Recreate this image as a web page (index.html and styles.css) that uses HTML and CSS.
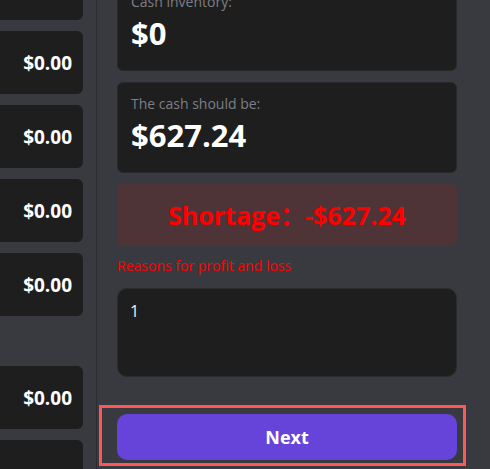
FILE: index.html
```html
<!DOCTYPE html>
<html lang="en">
<head>
<meta charset="utf-8">
<title>Cash count</title>
<link rel="stylesheet" href="styles.css">
</head>
<body>
<div class="app">
  <aside class="side">
    <div class="side-list">
      <div class="amount-card">$0.00</div>
      <div class="amount-card">$0.00</div>
      <div class="amount-card">$0.00</div>
      <div class="amount-card">$0.00</div>
      <div class="amount-card">$0.00</div>
      <div class="group-gap"></div>
      <div class="amount-card">$0.00</div>
      <div class="amount-card tall">$0.00</div>
    </div>
  </aside>
  <main class="main">
    <div class="content">
      <div class="stat-card first">
        <div class="stat-label">Cash inventory:</div>
        <div class="stat-value">$0</div>
      </div>
      <div class="stat-card">
        <div class="stat-label">The cash should be:</div>
        <div class="stat-value">$627.24</div>
      </div>
      <div class="shortage">Shortage：-$627.24</div>
      <div class="reason-label">Reasons for profit and loss</div>
      <div class="reason-box">1</div>
    </div>
    <div class="footer">
      <button class="next-btn">Next</button>
    </div>
  </main>
</div>
</body>
</html>
```
FILE: styles.css
```css
html, body {
  margin: 0;
  padding: 0;
  height: 100%;
  overflow: hidden;
  background: #393a3f;
  font-family: "Open Sans", "Noto Sans", "Noto Sans CJK SC", sans-serif;
}

.app {
  display: flex;
  height: 469px;
  overflow: hidden;
}

.side {
  width: 96px;
  flex: 0 0 96px;
  border-right: 1px solid #2c2d31;
  overflow: hidden;
}

.side-list {
  display: flex;
  flex-direction: column;
  gap: 11px;
  margin-top: -43px;
  margin-left: -20px;
  margin-right: 13px;
}

.amount-card {
  flex: 0 0 auto;
  height: 63px;
  background: #1e1e1e;
  border-radius: 6px;
  display: flex;
  align-items: center;
  justify-content: flex-end;
  padding-right: 11px;
  color: #ffffff;
  font-weight: 700;
  font-size: 19px;
}

.amount-card.tall {
  height: 90px;
}

.group-gap {
  flex: 0 0 auto;
  height: 28px;
}

.main {
  flex: 1;
  display: flex;
  flex-direction: column;
  overflow: hidden;
}

.content {
  display: flex;
  flex-direction: column;
  padding: 0 33px 0 20px;
}

.stat-card {
  background: #1e1e1e;
  border: 1px solid #28292c;
  border-radius: 6px;
  padding: 11px 13px 17px;
  margin-bottom: 11px;
}

.stat-card.first {
  margin-top: -20px;
}

.stat-label {
  color: #7d7f87;
  font-size: 14px;
  line-height: 20px;
}

.stat-value {
  color: #ffffff;
  font-weight: 700;
  font-size: 31px;
  line-height: 40px;
  margin-top: 1px;
}

.shortage {
  background: #4e3337;
  border-radius: 6px;
  color: #ff0000;
  font-weight: 700;
  font-size: 25px;
  line-height: 34px;
  padding: 14px 0;
  text-align: center;
}

.reason-label {
  color: #ff0000;
  font-size: 14px;
  line-height: 20px;
  margin-top: 10px;
}

.reason-box {
  margin-top: 12px;
  height: 89px;
  box-sizing: border-box;
  background: #1e1e1e;
  border: 1px solid #2a2b2e;
  border-radius: 10px;
  padding: 10px 12px;
  color: #f2f2f2;
  font-size: 16px;
  line-height: 24px;
}

.footer {
  margin: 28px 24px 0 2px;
  border: 3px solid #ff5757;
  padding: 6px 6px 3px 15px;
}

.next-btn {
  display: block;
  width: 100%;
  height: 46px;
  border: none;
  border-radius: 10px;
  background: #6644d9;
  color: #ffffff;
  font-family: inherit;
  font-weight: 700;
  font-size: 18px;
  cursor: pointer;
}
```
